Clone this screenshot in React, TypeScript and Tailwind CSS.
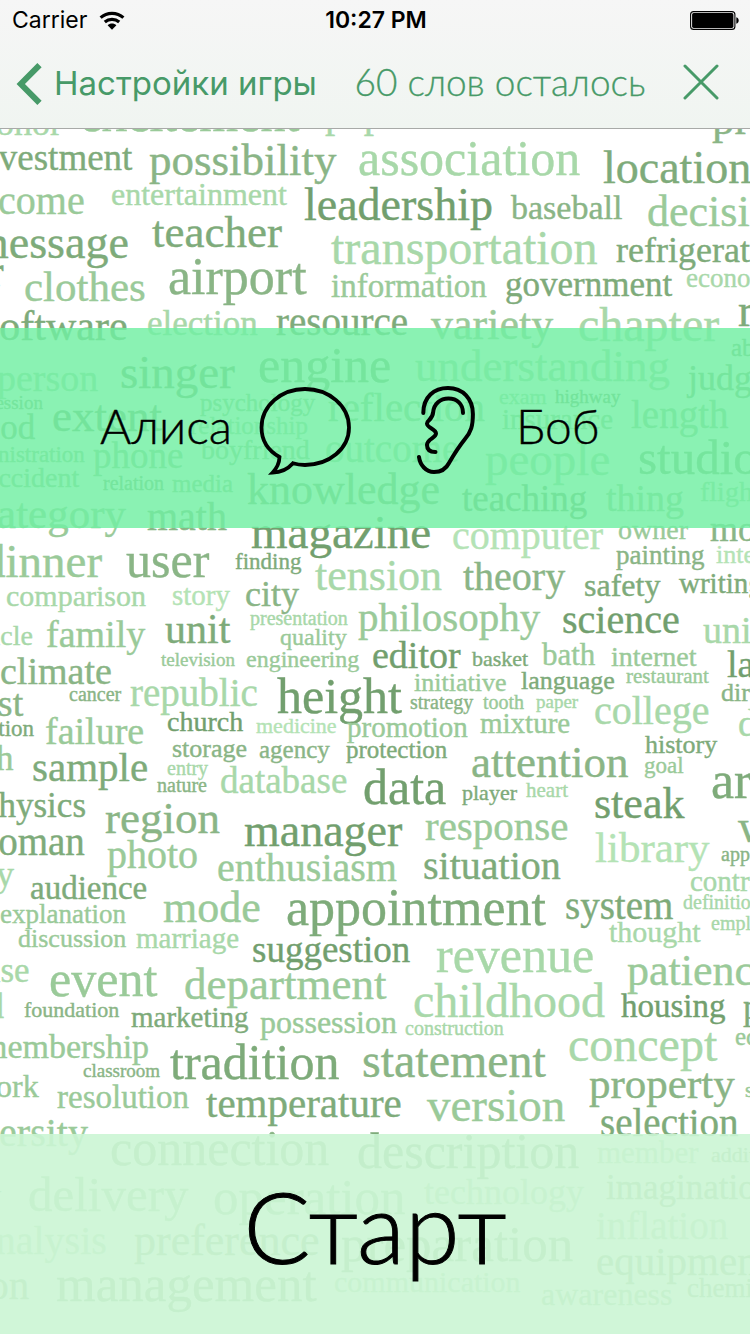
import React from "react";

type Word = [text: string, x: number, baseline: number, width: number, shade: number];

const shades = ["#729f6e", "#7eab7a", "#8ab586", "#9aca99", "#a8d8a9", "#b4e3b5"];

const words: Word[] = [
  ["donor", -22, 135, 84, 4], ["excitement", 80, 131, 220, 3], ["paper", 325, 127, 90, 4], ["protocol", 712, 135, 150, 2],
  ["investment", -30, 170, 161, 1], ["possibility", 149, 176, 186, 2], ["association", 358, 175, 220, 4], ["location", 603, 184, 148, 1],
  ["income", -33, 215, 119, 3], ["entertainment", 111, 205, 176, 4], ["leadership", 304, 221, 189, 0], ["baseball", 511, 220, 110, 2],
  ["decision", 647, 227, 147, 3], ["message", -27, 259, 157, 1], ["teacher", 152, 248, 130, 1], ["transportation", 331, 264, 266, 4],
  ["refrigerator", 616, 262, 164, 1], ["car", -50, 287, 54, 1], ["clothes", 24, 301, 123, 3], ["airport", 168, 295, 139, 2],
  ["information", 331, 298, 156, 3], ["government", 505, 296, 169, 1], ["economy", 686, 288, 98, 4],
  ["software", -17, 340, 144, 1], ["election", 147, 335, 110, 4], ["resource", 276, 335, 132, 1], ["variety", 431, 340, 122, 3],
  ["chapter", 578, 341, 140, 4], ["risk", 738, 326, 70, 1],
  ["person", -3, 391, 101, 4], ["singer", 120, 388, 115, 1], ["engine", 258, 382, 132, 2], ["understanding", 415, 382, 253, 4],
  ["above", 731, 356, 60, 2], ["judge", 688, 390, 80, 2],
  ["session", -12, 409, 54, 2], ["extent", 52, 432, 110, 1], ["psychology", 200, 411, 115, 3], ["relationship", 190, 434, 120, 4],
  ["reflection", 328, 421, 158, 3], ["exam", 499, 404, 47, 4], ["highway", 555, 403, 65, 1], ["insurance", 502, 429, 110, 3],
  ["length", 631, 428, 98, 3], ["food", -29, 439, 64, 2], ["administration", -48, 462, 131, 3], ["phone", 93, 468, 91, 3],
  ["boyfriend", 201, 460, 110, 3], ["outcome", 325, 462, 134, 4], ["people", 485, 475, 124, 4], ["studio", 638, 474, 120, 2],
  ["accident", -14, 488, 93, 3], ["relation", 103, 490, 61, 2], ["media", 172, 492, 62, 3], ["knowledge", 247, 505, 195, 2],
  ["teaching", 462, 511, 127, 1], ["thing", 606, 511, 78, 3], ["flight", 700, 502, 60, 4], ["category", -22, 528, 147, 3],
  ["math", 147, 531, 80, 2], ["magazine", 251, 548, 181, 0], ["computer", 452, 550, 150, 5], ["owner", 618, 540, 70, 3],
  ["model", 710, 541, 90, 2], ["painting", 616, 565, 89, 2], ["interest", 716, 564, 76, 5],
  ["dinner", -18, 577, 119, 3], ["user", 126, 577, 84, 2], ["finding", 235, 569, 67, 1], ["tension", 315, 591, 128, 4],
  ["theory", 463, 591, 103, 2], ["safety", 584, 596, 77, 1], ["writing", 679, 593, 85, 1],
  ["comparison", 6, 606, 142, 4], ["story", 172, 605, 58, 5], ["city", 245, 606, 54, 2], ["presentation", 250, 625, 99, 4],
  ["philosophy", 358, 631, 181, 3], ["science", 562, 634, 118, 0], ["union", 703, 643, 87, 4], ["quality", 280, 645, 66, 3],
  ["article", -37, 646, 69, 4], ["family", 46, 647, 98, 3], ["unit", 165, 643, 66, 1], ["television", 161, 666, 75, 3],
  ["engineering", 246, 667, 114, 3], ["editor", 372, 668, 88, 0], ["basket", 472, 666, 55, 1], ["bath", 542, 665, 54, 3],
  ["internet", 611, 667, 84, 3], ["law", 727, 677, 55, 0], ["climate", 0, 684, 111, 2], ["height", 277, 713, 124, 0],
  ["initiative", 414, 692, 93, 3], ["language", 521, 690, 93, 1], ["restaurant", 626, 684, 81, 3], ["direction", 721, 702, 92, 2],
  ["cancer", 69, 701, 51, 2], ["republic", 130, 706, 128, 4], ["cost", -38, 716, 62, 2], ["strategy", 410, 709, 63, 2],
  ["tooth", 483, 709, 42, 3], ["paper", 536, 708, 43, 4], ["college", 594, 725, 115, 4], ["dealer", 738, 736, 94, 4],
  ["failure", 45, 744, 100, 3], ["church", 167, 732, 77, 0], ["medicine", 256, 733, 81, 5], ["promotion", 347, 737, 119, 3],
  ["mixture", 480, 733, 90, 3], ["position", -40, 736, 74, 1], ["storage", 172, 758, 76, 2], ["agency", 259, 758, 72, 2],
  ["protection", 346, 758, 100, 1], ["attention", 471, 778, 159, 2], ["history", 645, 754, 73, 1], ["goal", 644, 773, 40, 3],
  ["health", -72, 770, 86, 3], ["sample", 32, 781, 115, 1], ["entry", 167, 775, 42, 4], ["nature", 157, 792, 50, 2],
  ["database", 220, 793, 127, 4], ["data", 363, 804, 84, 0], ["player", 462, 800, 54, 1], ["heart", 526, 798, 41, 4],
  ["area", 711, 799, 86, 1], ["steak", 594, 819, 90, 0], ["physics", -19, 817, 106, 1], ["region", 105, 834, 115, 2],
  ["manager", 244, 847, 158, 0], ["response", 425, 840, 145, 3], ["world", 738, 842, 110, 2], ["woman", -30, 855, 115, 1],
  ["photo", 107, 869, 90, 3], ["library", 595, 862, 115, 5], ["appearance", 721, 861, 88, 2], ["enthusiasm", 217, 882, 179, 3],
  ["situation", 423, 880, 137, 1], ["contract", 690, 891, 94, 4], ["army", -60, 886, 73, 4], ["audience", 30, 900, 116, 1],
  ["definition", 683, 909, 79, 4], ["employer", 711, 930, 76, 4], ["explanation", 0, 924, 124, 3], ["mode", 163, 923, 98, 3],
  ["appointment", 286, 926, 258, 1], ["system", 565, 919, 107, 1], ["discussion", 18, 948, 107, 3], ["marriage", 136, 948, 102, 4],
  ["thought", 609, 942, 91, 4], ["suggestion", 252, 962, 157, 0], ["revenue", 436, 972, 159, 4], ["patience", 627, 986, 145, 3],
  ["event", 49, 996, 109, 3], ["department", 184, 1000, 204, 3], ["house", -52, 982, 81, 4], ["childhood", 413, 1017, 190, 4],
  ["world", -80, 1018, 84, 4], ["foundation", 24, 1017, 96, 2], ["marketing", 131, 1027, 116, 1], ["possession", 260, 1033, 137, 3],
  ["construction", 405, 1035, 99, 4], ["housing", 621, 1018, 103, 0], ["power", 743, 1019, 90, 1], ["concept", 568, 1061, 150, 4],
  ["ecology", 735, 1045, 80, 3], ["membership", -19, 1059, 170, 3], ["tradition", 170, 1079, 168, 1], ["statement", 362, 1077, 183, 2],
  ["classroom", 83, 1077, 77, 2], ["work", -27, 1097, 65, 3], ["resolution", 57, 1109, 132, 3], ["temperature", 206, 1117, 195, 1],
  ["version", 427, 1121, 139, 3], ["property", 589, 1098, 144, 2], ["song", 745, 1098, 40, 3], ["selection", 600, 1136, 138, 1],
  ["university", -72, 1147, 161, 3], ["connection", 110, 1165, 221, 2], ["description", 357, 1168, 224, 1], ["member", 597, 1163, 100, 4],
  ["addition", 711, 1162, 72, 2], ["goal", -50, 1192, 52, 2], ["delivery", 28, 1211, 160, 3], ["operation", 213, 1215, 193, 3],
  ["technology", 424, 1204, 162, 4], ["imagination", 606, 1199, 167, 2], ["analysis", -22, 1255, 130, 4], ["preference", 134, 1256, 184, 2],
  ["preparation", 341, 1262, 234, 2], ["inflation", 596, 1239, 131, 4], ["equipment", 596, 1275, 174, 2], ["person", -80, 1299, 109, 2],
  ["management", 56, 1302, 259, 2], ["communication", 334, 1292, 189, 4], ["awareness", 541, 1305, 132, 3], ["chemistry", 687, 1298, 107, 2],
];

const pen = document.createElement("canvas").getContext("2d")!;

/* Font size, in whole pixels, at which a word spans the given width. */
function sizeFor(text: string, width: number) {
  pen.font = '100px "Liberation Serif"';
  return Math.round((width / pen.measureText(text).width) * 100);
}

function WordCloud() {
  return (
    <div aria-hidden="true" className="absolute inset-0 overflow-hidden bg-white font-['Liberation_Serif',serif] select-none">
      {words.map(([text, x, baseline, width, shade]) => {
        const fontSize = sizeFor(text, width);
        return (
          <span
            key={`${text}-${x}-${baseline}`}
            className="absolute leading-none whitespace-nowrap [-webkit-text-stroke:0.4px_currentColor]"
            style={{ left: x, top: baseline - Math.round(fontSize * 0.84), fontSize, color: shades[shade] }}
          >
            {text}
          </span>
        );
      })}
    </div>
  );
}

function WifiIcon() {
  return (
    <svg viewBox="0 0 26 19" className="h-[19px] w-[26px]" fill="none" stroke="black" strokeWidth="3.2" aria-hidden="true">
      <path d="M1.6 6.6C8 .9 18 .9 24.4 6.6" />
      <path d="M5.8 11C10 7.4 16 7.4 20.2 11" />
      <path d="M8.6 14.2C11 12 15 12 17.4 14.2L13 18.8Z" fill="black" stroke="none" />
    </svg>
  );
}

function BatteryIcon() {
  return (
    <svg viewBox="0 0 50 19" className="h-[19px] w-[50px]" aria-hidden="true">
      <rect x="0.6" y="0.6" width="44.300" height="17.800" rx="3" fill="none" stroke="black" strokeWidth="1.1" />
      <rect x="2.100" y="2.100" width="41.300" height="14.800" rx="1.6" />
      <path d="M46.3 6.3C49.5 7 49.5 12 46.3 12.7Z" />
    </svg>
  );
}

function SpeechIcon() {
  return (
    <svg viewBox="259 384 93 91" className="h-[91px] w-[93px]" fill="none" stroke="black" strokeWidth="3.8" aria-hidden="true">
      <path d="M279.5 456C268 449.500 261.500 439 261.500 426.500C261.500 405 281 388 305 388S349 405 349 426.500S329 464 305 464C300.500 464 297 463.600 293 462.300C287.500 468.500 281 471.500 272.500 471.700C277 467 279.300 462 279.500 456Z" />
    </svg>
  );
}

function EarIcon() {
  return (
    <svg viewBox="417 383 58 91" className="h-[91px] w-[58px]" fill="none" stroke="black" strokeWidth="4" strokeLinecap="round" strokeLinejoin="round" aria-hidden="true">
      <path d="M423.300 411C423.300 395 434 386 448 386C463 386 472.900 397 472.900 412C472.900 424 471 430 465 437C457 447 453 454 449 461C446 467 441 470 434 470C426 470 420 463 419 455" />
      <path d="M463 411C463 402 457 396.500 448.500 396.500C440 396.500 434 402 433.200 410C432.500 418 427 418 427 421.500C427 426 436 427 436 431.500C436 436 427 437 427 443C427 447.500 430 450 435.500 450" />
    </svg>
  );
}

export default function App() {
  return (
    <div className="relative flex min-h-screen flex-col font-['Lato',sans-serif] text-black">
      <WordCloud />

      <header className="relative border-b border-[#a8aaa8] bg-gradient-to-b from-[#f6f6f6] to-[#f0f5f1]">
        <div className="grid h-10 grid-cols-3 items-center pr-[10px] pl-3 font-['Inter',sans-serif] text-[23px]">
          <div className="flex items-center gap-3">
            <span>Carrier</span>
            <WifiIcon />
          </div>
          <time className="text-center font-semibold">10:27 PM</time>
          <div className="flex justify-end">
            <BatteryIcon />
          </div>
        </div>
        <nav className="flex h-[88px] items-center pr-[31px] pl-4 text-[#479a68]">
          <button type="button" className="flex items-center gap-3 font-['Inter',sans-serif] text-[33px]">
            <svg viewBox="0 0 26 42" className="h-[42px] w-[26px]" fill="none" stroke="currentColor" strokeWidth="6" aria-hidden="true">
              <path d="M23.500 2.200L4.800 21L23.500 39.800" />
            </svg>
            <span>Настройки игры</span>
          </button>
          <h1 className="mx-auto pb-1 text-[37px] font-light whitespace-nowrap [-webkit-text-stroke:0.3px_currentColor]">
            60 слов осталось
          </h1>
          <button type="button" aria-label="Закрыть" className="pb-1">
            <svg viewBox="0 0 36 36" className="h-9 w-9" fill="none" stroke="currentColor" strokeWidth="3" strokeLinecap="round" aria-hidden="true">
              <path d="M2 2L34 34M34 2L2 34" />
            </svg>
          </button>
        </nav>
      </header>

      <main className="relative flex flex-1 flex-col justify-between pt-[199px]">
        <section className="grid h-[200px] grid-cols-2 bg-[rgba(112,239,162,0.82)] pt-1 text-[48px] font-light [-webkit-text-stroke:0.4px_currentColor]">
          <div className="flex items-center justify-end gap-[27px] pr-[23px]">
            <span className="pb-2">Алиса</span>
            <SpeechIcon />
          </div>
          <div className="flex items-center gap-[41px] pl-[42px]">
            <EarIcon />
            <span className="pb-2">Боб</span>
          </div>
        </section>
        <button type="button" className="h-[200px] w-full bg-[rgba(203,245,212,0.9)] pb-4 text-[99px] font-light [-webkit-text-stroke:1px_currentColor]">
          Старт
        </button>
      </main>
    </div>
  );
}
